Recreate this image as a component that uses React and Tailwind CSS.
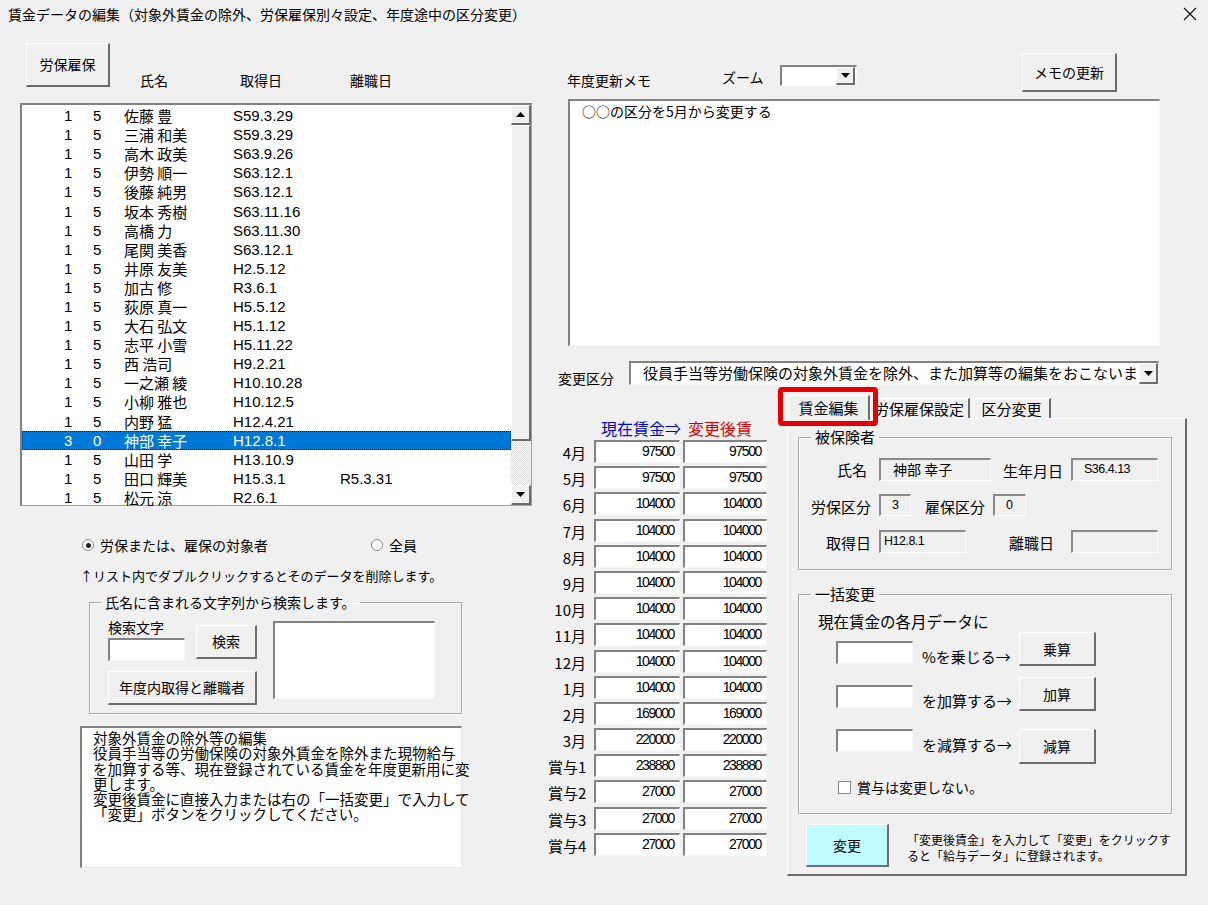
import React from "react";

const Btn = ({ className = "", children }) => (
  <div
    className={
      "flex items-center justify-center bg-[#f0f0f0] border-t border-l border-r-2 border-b-2 border-t-white border-l-white border-r-[#6b6b6b] border-b-[#6b6b6b] " +
      className
    }
  >
    {children}
  </div>
);

const Field = ({ className = "", children }) => (
  <div
    className={
      "bg-white border-t-2 border-l-2 border-r border-b border-t-[#828282] border-l-[#828282] border-r-[#f8f8f8] border-b-[#f8f8f8] " +
      className
    }
  >
    {children}
  </div>
);

const RO = ({ className = "", children }) => (
  <div
    className={
      "bg-[#f0f0f0] border-t-2 border-l-2 border-r border-b border-t-[#8a8a8a] border-l-[#8a8a8a] border-r-white border-b-white text-[12.5px] leading-[18px] font-['Liberation_Sans','Noto_Sans_CJK_JP',sans-serif] tracking-[-0.5px] " +
      className
    }
  >
    {children}
  </div>
);

const Tri = ({ down }) => (
  <svg width="9" height="5" viewBox="0 0 9 5">
    {down ? <polygon points="0,0 9,0 4.5,5" fill="#000" /> : <polygon points="0,5 9,5 4.5,0" fill="#000" />}
  </svg>
);

const rows = [
  ["1", "5", "佐藤 豊", "S59.3.29", ""],
  ["1", "5", "三浦 和美", "S59.3.29", ""],
  ["1", "5", "高木 政美", "S63.9.26", ""],
  ["1", "5", "伊勢 順一", "S63.12.1", ""],
  ["1", "5", "後藤 純男", "S63.12.1", ""],
  ["1", "5", "坂本 秀樹", "S63.11.16", ""],
  ["1", "5", "高橋 力", "S63.11.30", ""],
  ["1", "5", "尾関 美香", "S63.12.1", ""],
  ["1", "5", "井原 友美", "H2.5.12", ""],
  ["1", "5", "加古 修", "R3.6.1", ""],
  ["1", "5", "荻原 真一", "H5.5.12", ""],
  ["1", "5", "大石 弘文", "H5.1.12", ""],
  ["1", "5", "志平 小雪", "H5.11.22", ""],
  ["1", "5", "西 浩司", "H9.2.21", ""],
  ["1", "5", "一之瀬 綾", "H10.10.28", ""],
  ["1", "5", "小柳 雅也", "H10.12.5", ""],
  ["1", "5", "内野 猛", "H12.4.21", ""],
  ["3", "0", "神部 幸子", "H12.8.1", ""],
  ["1", "5", "山田 学", "H13.10.9", ""],
  ["1", "5", "田口 輝美", "H15.3.1", "R5.3.31"],
  ["1", "5", "松元 涼", "R2.6.1", ""],
];

const months = [
  ["4月", "97500"],
  ["5月", "97500"],
  ["6月", "104000"],
  ["7月", "104000"],
  ["8月", "104000"],
  ["9月", "104000"],
  ["10月", "104000"],
  ["11月", "104000"],
  ["12月", "104000"],
  ["1月", "104000"],
  ["2月", "169000"],
  ["3月", "220000"],
  ["賞与1", "238880"],
  ["賞与2", "27000"],
  ["賞与3", "27000"],
  ["賞与4", "27000"],
];

const groupCls =
  "border border-[#a9a9a9] shadow-[inset_1px_1px_0_#ffffff,1px_1px_0_#ffffff]";

export default function App() {
  return (
    <div className="w-[1208px] h-[905px] bg-[#f0f0f0] overflow-hidden text-black font-['Noto_Sans_CJK_JP',sans-serif]">
      {/* title bar */}
      <div className="h-[30px] flex items-center pl-[8px] pr-[11px]">
        <div className="text-[14px] leading-[20px] -mt-[3px]">
          賃金データの編集（対象外賃金の除外、労保雇保別々設定、年度途中の区分変更）
        </div>
        <div className="ml-auto -mt-[3px]">
          <svg width="14" height="14" viewBox="0 0 14 14">
            <path d="M1 1 L13 13 M13 1 L1 13" stroke="#111" strokeWidth="1.1" />
          </svg>
        </div>
      </div>

      <div className="flex">
        {/* LEFT column */}
        <div className="ml-[20px] w-[512px] flex flex-col">
          <div className="h-[73px] flex items-start">
            <Btn className="ml-[6px] mt-[13px] w-[84px] h-[44px] text-[14px]">労保雇保</Btn>
            <div className="mt-[40px] ml-[30px] w-[100px] text-[14px] leading-[20px]">氏名</div>
            <div className="mt-[40px] w-[110px] text-[14px] leading-[20px]">取得日</div>
            <div className="mt-[40px] text-[14px] leading-[20px]">離職日</div>
          </div>

          {/* list box */}
          <div className="h-[403px] bg-white border-t-2 border-l-2 border-r border-b border-t-[#828282] border-l-[#828282] border-r-[#a0a0a0] border-b-[#a0a0a0] flex">
            <div className="flex-1 pt-[1px] font-['Liberation_Sans','Noto_Sans_CJK_JP',sans-serif] text-[15px]">
              {rows.map((r, i) => {
                const sel = r[2] === "神部 幸子";
                return (
                  <div
                    key={i}
                    className={
                      "h-[19.1px] flex items-center leading-[19px] " +
                      (sel ? "bg-[#0078d7] text-white outline-1 outline-dotted outline-[#222] -outline-offset-1" : "")
                    }
                  >
                    <div className="ml-[42px] w-[29px]">{r[0]}</div>
                    <div className="w-[31px]">{r[1]}</div>
                    <div className="w-[109px] font-['Noto_Sans_CJK_JP',sans-serif] text-[15px]">{r[2]}</div>
                    <div className="w-[107px]">{r[3]}</div>
                    <div>{r[4]}</div>
                  </div>
                );
              })}
            </div>
            {/* scrollbar */}
            <div className="w-[20px] flex flex-col">
              <Btn className="h-[20px]">
                <Tri />
              </Btn>
              <div className="h-[316px] bg-[#f0f0f0] border-t border-l border-r-2 border-b-2 border-t-white border-l-white border-r-[#6b6b6b] border-b-[#6b6b6b]" />
              <div className="flex-1 bg-[repeating-conic-gradient(#ffffff_0_25%,#dcdcdc_0_50%)] bg-[length:2px_2px]" />
              <Btn className="h-[20px]">
                <Tri down />
              </Btn>
            </div>
          </div>

          {/* radio row */}
          <div className="mt-[29px] flex items-center h-[20px] text-[14px]">
            <div className="ml-[62px] w-[289px] flex items-center">
              <div className="w-[12px] h-[12px] rounded-full border border-[#8a8a8a] bg-white flex items-center justify-center">
                <div className="w-[5px] h-[5px] rounded-full bg-[#222]" />
              </div>
              <span className="ml-[6px] leading-[20px]">労保または、雇保の対象者</span>
            </div>
            <div className="w-[12px] h-[12px] rounded-full border border-[#8a8a8a] bg-white" />
            <span className="ml-[6px] leading-[20px]">全員</span>
          </div>

          <div className="mt-[11px] ml-[60px] text-[13px] leading-[20px] whitespace-nowrap">
            ↑リスト内でダブルクリックするとそのデータを削除します。
          </div>

          <fieldset className={"mt-[6px] ml-[69px] w-[373px] h-[122px] " + groupCls}>
            <legend className="ml-[11px] px-[4px] text-[14px] leading-[20px]">
              氏名に含まれる文字列から検索します。
            </legend>
            <div className="flex ml-[18px]">
              <div className="w-[149px] flex flex-col">
                <div className="flex">
                  <div className="flex flex-col">
                    <div className="mt-[5px] text-[14px] leading-[20px]">検索文字</div>
                    <Field className="mt-[1px] w-[77px] h-[23px]" />
                  </div>
                  <Btn className="ml-auto mt-[13px] w-[61px] h-[34px] text-[14px]">検索</Btn>
                </div>
                <Btn className="mt-[10px] w-[149px] h-[34px] text-[14px]">年度内取得と離職者</Btn>
              </div>
              <Field className="ml-[16px] mt-[9px] w-[162px] h-[78px]" />
            </div>
          </fieldset>

          <div className="mt-[12px] ml-[60px] w-[382px] h-[142px] bg-white border-t-2 border-l-2 border-r border-b border-t-[#828282] border-l-[#828282] border-r-[#e8e8e8] border-b-[#e8e8e8] pl-[11px] pt-[2px] text-[14.5px] leading-[15.3px] whitespace-nowrap">
            <div className="h-[15.3px]">対象外賃金の除外等の編集</div>
            <div className="h-[15.3px]">役員手当等の労働保険の対象外賃金を除外また現物給与</div>
            <div className="h-[15.3px]">を加算する等、現在登録されている賃金を年度更新用に変</div>
            <div className="h-[15.3px]">更します。</div>
            <div className="h-[15.3px]">変更後賃金に直接入力または右の「一括変更」で入力して</div>
            <div className="h-[15.3px]">「変更」ボタンをクリックしてください。</div>
          </div>
        </div>

        {/* RIGHT column */}
        <div className="ml-[8px] w-[647px] flex flex-col">
          <div className="h-[69px] flex items-start">
            <div className="ml-[27px] mt-[40px] w-[155px] text-[14px] leading-[20px]">年度更新メモ</div>
            <div className="mt-[37px] w-[58px] text-[14px] leading-[20px]">ズーム</div>
            <Field className="mt-[35px] w-[77px] h-[21px] flex justify-end items-stretch pr-[1px]">
              <Btn className="w-[19px]">
                <Tri down />
              </Btn>
            </Field>
            <Btn className="ml-[165px] mt-[23px] w-[95px] h-[39px] text-[14px]">メモの更新</Btn>
          </div>

          <Field className="ml-[28px] w-[592px] h-[247px] pl-[12px] text-[14px] leading-[20px]">
            ○○の区分を5月から変更する
          </Field>

          <div className="mt-[15px] h-[24px] flex items-start">
            <div className="ml-[18px] w-[71px] mt-[7px] text-[14px] leading-[20px]">変更区分</div>
            <Field className="w-[530px] h-[24px] flex items-stretch overflow-hidden">
              <div className="flex-1 overflow-hidden whitespace-nowrap pl-[12px] text-[15px] leading-[20px]">
                役員手当等労働保険の対象外賃金を除外、また加算等の編集をおこないます
              </div>
              <Btn className="w-[19px]">
                <Tri down />
              </Btn>
            </Field>
          </div>

          <div className="flex">
            {/* months column */}
            <div className="ml-[8px] w-[219px] flex flex-col">
              <div className="mt-[33px] ml-[53px] h-[20px] flex text-[16px] leading-[20px] whitespace-nowrap">
                <span className="text-[#0000dd]">現在賃金⇒</span>
                <span className="ml-[7px] text-[#e00000]">変更後賃</span>
              </div>
              <div className="mt-[2px] grid auto-rows-[26.2px]">
                {months.map(([m, v], i) => (
                  <div key={i} className="flex items-start">
                    <div className="w-[46px] pr-[8px] text-right text-[15px] leading-[20px] pt-[3px] whitespace-nowrap">
                      {m}
                    </div>
                    <Field className="w-[86px] h-[23px] text-right pr-[5px] text-[14px] leading-[19px] font-['Liberation_Sans',sans-serif] tracking-[-1.4px]">
                      {v}
                    </Field>
                    <Field className="ml-[3px] w-[84px] h-[23px] text-right pr-[5px] text-[14px] leading-[19px] font-['Liberation_Sans',sans-serif] tracking-[-1.4px]">
                      {v}
                    </Field>
                  </div>
                ))}
              </div>
            </div>

            {/* tab area */}
            <div className="ml-[11px] w-[409px] relative flex flex-col">
              <div className="h-[33px] flex items-end">
                <div className="ml-[10px] w-[82px] h-[25px] -mb-[2px] relative z-10 bg-[#f0f0f0] border-t border-l border-r-2 border-t-white border-l-white border-r-[#6b6b6b] flex items-center justify-center text-[15px] leading-[20px]">
                  賃金編集
                </div>
                <div className="w-[100px] h-[20px] bg-[#f0f0f0] border-t border-l border-r-2 border-t-white border-l-white border-r-[#6b6b6b] flex items-center justify-end pr-[4px] text-[15px] leading-[20px]">
                  労保雇保設定
                </div>
                <div className="ml-[3px] w-[78px] h-[20px] bg-[#f0f0f0] border-t border-l border-r-2 border-t-white border-l-white border-r-[#6b6b6b] flex items-center justify-center text-[15px] leading-[20px]">
                  区分変更
                </div>
              </div>
              {/* red highlight */}
              <div className="absolute left-0 top-[2px] w-[100px] h-[39px] border-[5px] border-[#e60000] rounded-[4px] z-20" />

              {/* panel */}
              <div className="ml-[9px] w-[400px] h-[458px] bg-[#f0f0f0] border-t border-l border-r-2 border-b-2 border-t-white border-l-white border-r-[#6b6b6b] border-b-[#6b6b6b] flex flex-col">
                <fieldset className={"mt-[8px] ml-[10px] w-[374px] h-[143px] " + groupCls}>
                  <legend className="ml-[12px] px-[4px] text-[15px] leading-[20px]">被保険者</legend>
                  <div className="mt-[11px] flex items-center text-[15px] leading-[20px]">
                    <div className="w-[80px] text-right pr-[12px] pt-[1px]">氏名</div>
                    <RO className="w-[112px] h-[23px] pl-[12px] text-[14px] font-['Noto_Sans_CJK_JP',sans-serif] tracking-normal">
                      神部 幸子
                    </RO>
                    <div className="w-[80px] text-right pr-[8px] pt-[3px]">生年月日</div>
                    <RO className="w-[87px] h-[23px] pl-[11px]">S36.4.13</RO>
                  </div>
                  <div className="mt-[12px] flex items-center text-[15px] leading-[20px]">
                    <div className="w-[80px] text-right pr-[8px] pt-[4px]">労保区分</div>
                    <RO className="w-[32px] h-[22px] pl-[11px]">3</RO>
                    <div className="w-[82px] text-right pr-[8px] pt-[4px]">雇保区分</div>
                    <RO className="w-[33px] h-[22px] pl-[11px]">0</RO>
                  </div>
                  <div className="mt-[13px] flex items-center text-[15px] leading-[20px]">
                    <div className="w-[80px] text-right pr-[8px] pt-[2px]">取得日</div>
                    <RO className="w-[87px] h-[23px] pl-[3px]">H12.8.1</RO>
                    <div className="w-[105px] text-right pr-[17px] pt-[2px]">離職日</div>
                    <RO className="w-[87px] h-[23px]" />
                  </div>
                </fieldset>

                <fieldset className={"mt-[14px] ml-[10px] w-[374px] h-[230px] " + groupCls}>
                  <legend className="ml-[12px] px-[4px] text-[15px] leading-[20px]">一括変更</legend>
                  <div className="mt-[7px] ml-[19px] text-[15.5px] leading-[20px]">現在賃金の各月データに</div>
                  <div className="mt-[1px] h-[34px] flex items-start text-[15px] leading-[20px]">
                    <Field className="ml-[37px] mt-[9px] w-[77px] h-[23px]" />
                    <div className="w-[106px] pl-[9px] mt-[15px] whitespace-nowrap">%を乗じる→</div>
                    <Btn className="w-[77px] h-[34px] text-[14px]">乗算</Btn>
                  </div>
                  <div className="mt-[11px] h-[34px] flex items-start text-[15px] leading-[20px]">
                    <Field className="ml-[37px] mt-[8px] w-[77px] h-[23px]" />
                    <div className="w-[106px] pl-[9px] mt-[14px] whitespace-nowrap">を加算する→</div>
                    <Btn className="w-[77px] h-[34px] text-[14px]">加算</Btn>
                  </div>
                  <div className="mt-[18px] h-[35px] flex items-start text-[15px] leading-[20px]">
                    <Field className="ml-[37px] w-[77px] h-[23px]" />
                    <div className="w-[106px] pl-[9px] mt-[6px] whitespace-nowrap">を減算する→</div>
                    <Btn className="w-[77px] h-[35px] text-[14px]">減算</Btn>
                  </div>
                  <div className="mt-[13px] ml-[39px] flex items-center">
                    <div className="w-[13px] h-[13px] bg-white border border-[#8a8a8a]" />
                    <span className="ml-[6px] text-[14px] leading-[20px]">賞与は変更しない。</span>
                  </div>
                </fieldset>

                <div className="mt-[10px] flex items-start">
                  <div className="ml-[18px] w-[83px] h-[43px] bg-[#c0fcff] border-t border-l border-r-2 border-b-2 border-t-white border-l-white border-r-[#6b6b6b] border-b-[#6b6b6b] flex items-center justify-center text-[14px]">
                    変更
                  </div>
                  <div className="ml-[18px] mt-[8px] text-[12px] leading-[16px] whitespace-nowrap">
                    <div>「変更後賃金」を入力して「変更」をクリックす</div>
                    <div>ると「給与データ」に登録されます。</div>
                  </div>
                </div>
              </div>
            </div>
          </div>
        </div>
      </div>
    </div>
  );
}
